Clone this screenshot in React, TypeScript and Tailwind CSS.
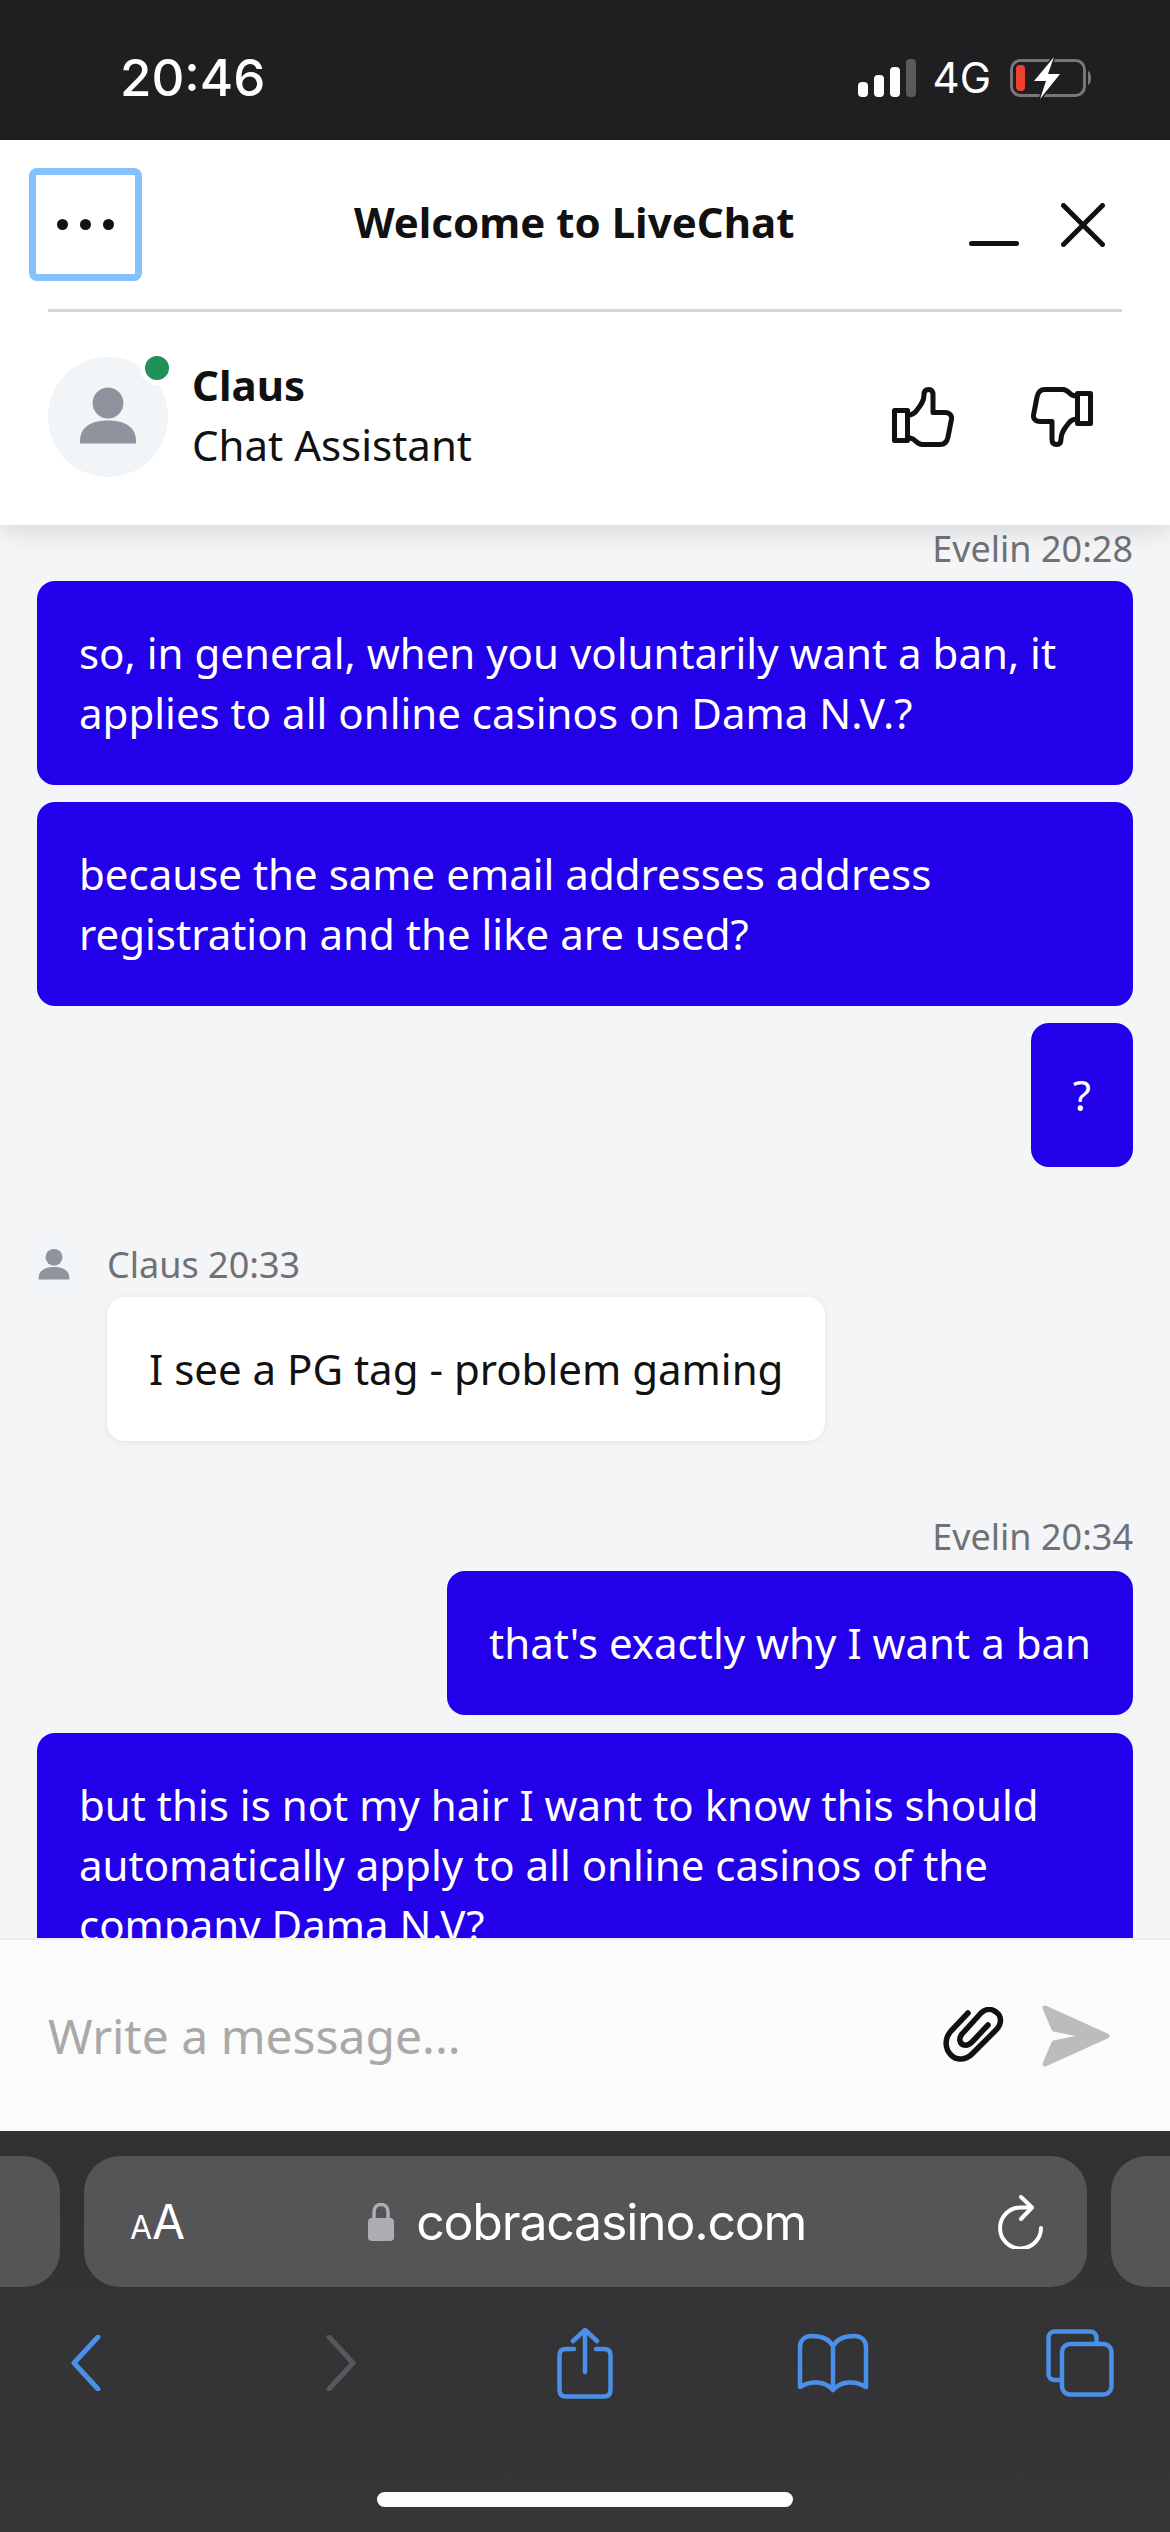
import React from "react";

const noto = "font-['Noto_Sans',sans-serif]";

function Signal() {
  return (
    <svg width="58" height="38" viewBox="0 0 58 38">
      <rect x="0" y="23" width="10" height="15" rx="4" fill="#fff" />
      <rect x="16" y="16" width="10" height="22" rx="4" fill="#fff" />
      <rect x="32" y="8" width="10" height="30" rx="4" fill="#fff" />
      <rect x="48" y="0" width="10" height="38" rx="4" fill="#5a5a5c" />
    </svg>
  );
}

function Battery() {
  return (
    <svg width="84" height="42" viewBox="0 0 84 42">
      <rect x="1.5" y="3.5" width="73" height="35" rx="9" fill="none" stroke="#77777a" strokeWidth="3" />
      <path d="M78 14 C82 15 82 27 78 28 Z" fill="#77777a" />
      <rect x="6" y="8" width="9" height="26" rx="4" fill="#f2402f" />
      <path d="M44 0 L24 24 L36 24 L30 42 L50 17 L38 17 Z" fill="#fff" stroke="#1f1f21" strokeWidth="3" paintOrder="stroke" />
    </svg>
  );
}

function Thumb({ down }: { down?: boolean }) {
  return (
    <svg width="62" height="60" viewBox="0 0 62 60" className={down ? "rotate-180" : ""}>
      <g fill="none" stroke="#111" strokeWidth="5" strokeLinejoin="round" strokeLinecap="round">
        <rect x="2.5" y="23.5" width="13" height="30" />
        <path d="M16 28 C20 28 23 26 25 23 C29 18 32 14 32 8 C32 4 34 2.5 36.5 2.5 C39 2.5 41 4 41 8 L41 25.5 L53 25.5 C58 25.5 60 29 59.5 32 L56 50 C55 55 52 57.5 48 57.5 L30 57.5 C26 57.5 24 54 21 52 C19 51 18 51 16 51" />
      </g>
    </svg>
  );
}

function Person({ size }: { size: number }) {
  return (
    <svg width={size} height={size} viewBox="0 0 60 60" fill="#8e939e">
      <circle cx="30" cy="20" r="11" />
      <path d="M10 47 C10 36 20 32.5 30 32.5 C40 32.5 50 36 50 47 L50 49 L10 49 Z" />
    </svg>
  );
}

function Meta({ children }: { children: React.ReactNode }) {
  return <div className="text-right text-[36px] leading-[48px] text-[#707176]">{children}</div>;
}

function Mine({ children, className = "" }: { children: React.ReactNode; className?: string }) {
  return (
    <div className={`self-end rounded-[18px] bg-[#2200ea] px-[42px] py-[42px] text-[42px] leading-[60px] text-white ${className}`}>
      {children}
    </div>
  );
}

function BrowserIcons() {
  const blue = "#4a8fe8";
  return (
    <div className="flex h-[72px] items-center">
      <svg width="30" height="56" viewBox="0 0 30 56" className="ml-[71px]">
        <path d="M27 2 L3 28 L27 54" fill="none" stroke={blue} strokeWidth="5" strokeLinecap="round" strokeLinejoin="round" />
      </svg>
      <svg width="30" height="56" viewBox="0 0 30 56" className="ml-[225px]">
        <path d="M3 2 L27 28 L3 54" fill="none" stroke="#58585c" strokeWidth="5" strokeLinecap="round" strokeLinejoin="round" />
      </svg>
      <svg width="56" height="72" viewBox="0 0 56 72" className="ml-[201px]">
        <g fill="none" stroke={blue} strokeWidth="4.5" strokeLinecap="round" strokeLinejoin="round">
          <path d="M17 22 L9 22 C4.5 22 2.5 24 2.5 28 L2.5 63 C2.5 67.5 4.5 69.5 9 69.5 L47 69.5 C51.5 69.5 53.5 67.5 53.5 63 L53.5 28 C53.5 24 51.5 22 47 22 L39 22" />
          <path d="M28 45 L28 3 M16 14 L28 3 L40 14" />
        </g>
      </svg>
      <svg width="72" height="60" viewBox="0 0 72 60" className="ml-[184px]">
        <g fill="none" stroke={blue} strokeWidth="4.5" strokeLinecap="round" strokeLinejoin="round">
          <path d="M36 13 C32 6 24 3 15 3 C8 3 3 7 3 14 L3 54 C14 47 28 48 36 57 C44 48 58 47 69 54 L69 14 C69 7 64 3 57 3 C48 3 40 6 36 13 Z" />
          <path d="M36 13 L36 56" />
        </g>
      </svg>
      <svg width="68" height="68" viewBox="0 0 68 68" className="ml-[177px]">
        <g fill="none" stroke={blue} strokeWidth="4.5" strokeLinejoin="round" strokeLinecap="round">
          <rect x="16" y="15" width="49.5" height="50.5" rx="8" />
          <path d="M16 51 L9 51 C5 51 2.5 48.5 2.5 45 L2.5 9 C2.5 5 5 2.5 9 2.5 L44 2.5 C48 2.5 50.5 5 50.5 9 L50.5 15" />
        </g>
      </svg>
    </div>
  );
}

export default function App() {
  return (
    <div className={`flex h-[2532px] w-[1170px] flex-col overflow-hidden bg-[#f4f5f7] ${noto}`}>
      {/* status bar */}
      <div className="flex h-[140px] shrink-0 items-center bg-[#1f1f21] pt-[15px] font-['Inter',sans-serif] text-white">
        <div className="ml-[120px] text-[51px] font-medium leading-none">20:46</div>
        <div className="ml-auto flex items-center pr-[76px]">
          <Signal />
          <span className="ml-[17px] text-[42px] leading-none">4G</span>
          <div className="ml-[19px]"><Battery /></div>
        </div>
      </div>

      {/* chat header */}
      <div className="relative z-10 h-[385px] shrink-0 bg-white shadow-[0_6px_24px_rgba(0,0,0,0.12)]">
        <div className="flex items-center pl-[29px] pr-[65px] pt-[28px]">
          <div className="flex h-[113px] w-[113px] items-center justify-center gap-[12px] rounded-[8px] border-[7px] border-[#85c1fa]">
            <span className="h-[11px] w-[11px] rounded-full bg-[#111]" />
            <span className="h-[11px] w-[11px] rounded-full bg-[#111]" />
            <span className="h-[11px] w-[11px] rounded-full bg-[#111]" />
          </div>
          <div className="mb-[6px] ml-[212px] text-[42px] font-bold leading-[60px] text-[#111]">Welcome to LiveChat</div>
          <div className="ml-auto flex items-center gap-[42px]">
            <span className="mt-[38px] h-[5px] w-[50px] rounded-full bg-[#111]" />
            <svg width="44" height="44" viewBox="0 0 44 44">
              <path d="M2.5 2.5 L41.5 41.5 M41.5 2.5 L2.5 41.5" stroke="#111" strokeWidth="5" strokeLinecap="round" />
            </svg>
          </div>
        </div>
        <div className="mx-[48px] mt-[28px] h-[3px] bg-[#d5d5d5]" />
        <div className="mt-[43px] flex items-center pl-[48px] pr-[77px]">
          <div className="relative flex h-[120px] w-[120px] items-center justify-center rounded-full bg-[#f1f5f8]">
            <Person size={84} />
            <span className="absolute right-[-6px] top-[-6px] h-[34px] w-[34px] rounded-full border-[5px] border-white bg-[#1f9257]" />
          </div>
          <div className="mb-[3px] ml-[24px]">
            <div className="text-[42px] font-bold leading-[60px] text-[#111]">Claus</div>
            <div className="text-[42px] leading-[60px] text-[#111]">Chat Assistant</div>
          </div>
          <div className="ml-auto flex items-center gap-[77px]">
            <Thumb />
            <Thumb down />
          </div>
        </div>
      </div>

      {/* messages */}
      <div className="flex h-[1413px] shrink-0 flex-col overflow-hidden px-[37px]">
        <div className="mb-[8px]"><Meta>Evelin 20:28</Meta></div>
        <div className="flex flex-col gap-[17px]">
          <Mine className="w-full">
            so, in general, when you voluntarily want a ban, it<br />
            applies to all online casinos on Dama N.V.?
          </Mine>
          <Mine className="w-full">
            because the same email addresses address<br />
            registration and the like are used?
          </Mine>
          <Mine>?</Mine>
        </div>

        <div className="ml-[-9px] mt-[72px] flex items-center">
          <div className="flex h-[52px] w-[52px] items-center justify-center rounded-full bg-[#f1f5f8]">
            <Person size={46} />
          </div>
          <div className="ml-[27px] text-[36px] leading-[48px] text-[#707176]">Claus 20:33</div>
        </div>
        <div className="ml-[70px] mt-[6px] self-start rounded-[18px] bg-white px-[42px] py-[42px] text-[42px] leading-[60px] text-[#111] shadow-[0_1px_6px_rgba(0,0,0,0.08)]">
          I see a PG tag - problem gaming
        </div>

        <div className="mb-[10px] mt-[72px]"><Meta>Evelin 20:34</Meta></div>
        <div className="flex flex-col gap-[18px]">
          <Mine>that's exactly why I want a ban</Mine>
          <Mine className="w-full shrink-0">
            but this is not my hair I want to know this should<br />
            automatically apply to all online casinos of the<br />
            company Dama N.V?
          </Mine>
        </div>
      </div>

      {/* composer */}
      <div className="z-10 flex h-[193px] shrink-0 items-center border-t-[2px] border-[#ececee] bg-[#fbfbfb] pl-[48px] pr-[60px]">
        <div className="text-[48px] leading-[60px] text-[#a9a9a9]">Write a message...</div>
        <svg width="64" height="57" viewBox="0 0 64 57" className="ml-auto">
          <path d="M26 6 L9 24 C2 32 3 42 9 48 C15 54 24 53 30 47 L54 23 C60 17 60 9 54 5 C49 1 43 2 39 6 L20 27 C16 32 18 37 22 38 C25 39 28 37 30 35 L46 18" fill="none" stroke="#111" strokeWidth="5.5" strokeLinecap="round" strokeLinejoin="round" />
        </svg>
        <svg width="68" height="62" viewBox="0 0 68 62" className="ml-[36px]">
          <path d="M3 3 L65 31 L3 59 L12 38 L46 31 L12 24 Z" fill="#bcbcbc" stroke="#bcbcbc" strokeWidth="5" strokeLinejoin="round" />
        </svg>
      </div>

      {/* safari bar */}
      <div className="relative flex-1 bg-gradient-to-b from-[#313133] to-[#363639] pt-[25px]">
        <div className="flex h-[131px] gap-[24px] font-['Inter',sans-serif] text-white">
          <div className="ml-[-60px] w-[120px] shrink-0 rounded-[36px] bg-[#555558]" />
          <div className="flex w-[1003px] shrink-0 items-center rounded-[36px] bg-[#555558]">
            <div className="ml-[46px] flex items-baseline leading-none">
              <span className="text-[32px]">A</span>
              <span className="text-[48px]">A</span>
            </div>
            <svg width="26" height="38" viewBox="0 0 26 38" className="ml-[183px]">
              <path d="M6 17 L6 9 C6 -1 20 -1 20 9 L20 17" fill="none" stroke="#aeaeb2" strokeWidth="3.5" />
              <rect x="0" y="15" width="26" height="23" rx="4" fill="#aeaeb2" />
            </svg>
            <span className="ml-[22px] text-[50px] leading-none tracking-[-1.2px]">cobracasino.com</span>
            <svg width="46" height="54" viewBox="0 0 46 54" className="ml-auto mr-[43px]">
              <g fill="none" stroke="#fff" strokeWidth="4" strokeLinecap="round" strokeLinejoin="round">
                <path d="M43 33 A20.5 20.5 0 1 1 22.5 12.5 L33 12.5" />
                <path d="M23 2 L34 12.5 L23 24" />
              </g>
            </svg>
          </div>
          <div className="w-[120px] shrink-0 rounded-[36px] bg-[#555558]" />
        </div>
        <div className="mt-[40px]">
          <BrowserIcons />
        </div>
        <div className="absolute bottom-[25px] left-[377px] h-[15px] w-[416px] rounded-full bg-white" />
      </div>
    </div>
  );
}
